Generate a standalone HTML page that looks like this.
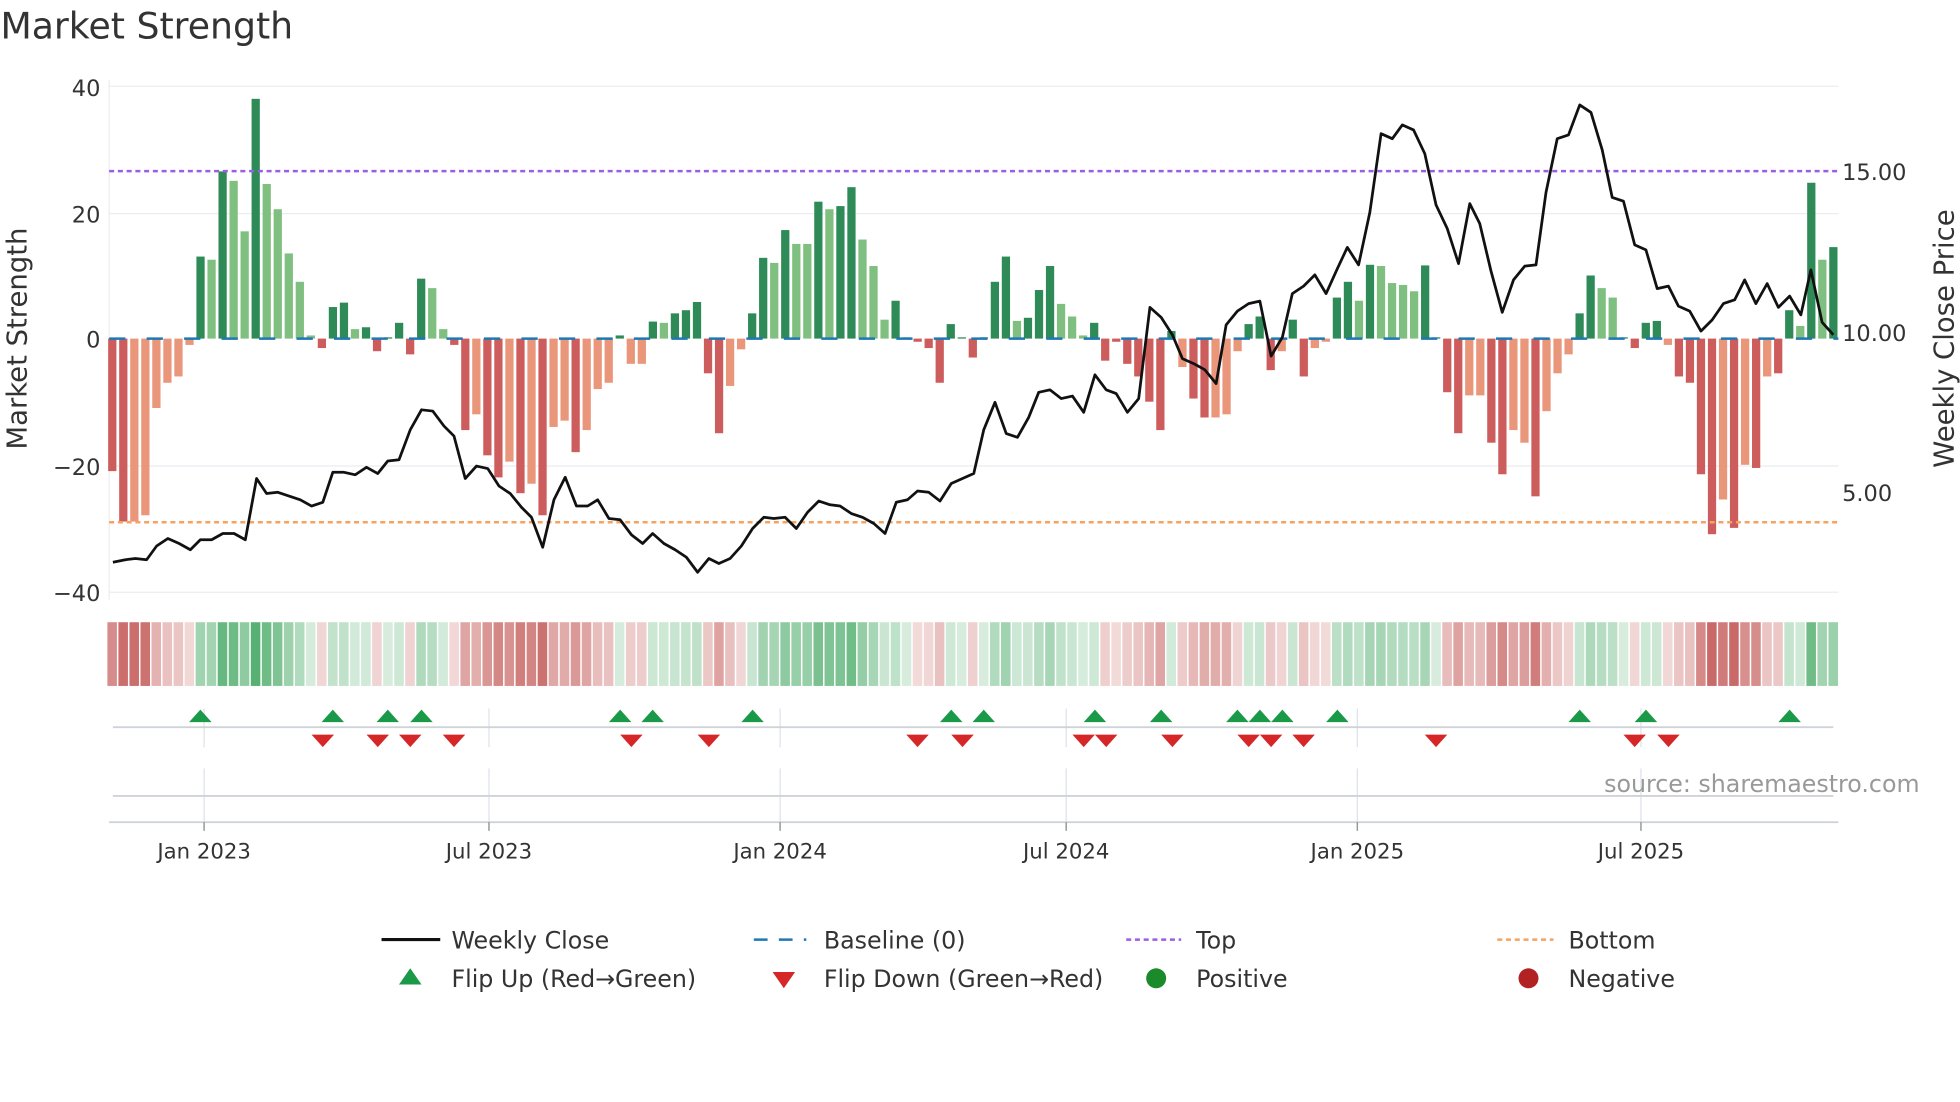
<!DOCTYPE html>
<html><head><meta charset="utf-8">
<style>
html,body{margin:0;padding:0;background:#fff;}
svg{display:block;font-family:"DejaVu Sans","Liberation Sans",sans-serif;}
</style></head>
<body>
<svg id="s" width="1960" height="1102" viewBox="0 0 1568 882" xmlns="http://www.w3.org/2000/svg">
<rect width="1568" height="882" fill="#fff"/>
<text x="0" y="31" font-size="29" fill="#333">Market Strength</text>
<g id="grid" stroke="#ececf2" stroke-width="1">
<line x1="87" y1="69" x2="1471" y2="69"/><line x1="87" y1="171" x2="1471" y2="171"/>
<line x1="87" y1="373" x2="1471" y2="373"/><line x1="87" y1="474" x2="1471" y2="474"/>
<line x1="87" y1="64" x2="87" y2="480"/>
</g>
<g font-size="18" fill="#333" text-anchor="end">
<text x="80" y="77">40</text><text x="80" y="178">20</text><text x="80" y="278">0</text>
<text x="80" y="380">−20</text><text x="80" y="481">−40</text>
</g>
<g font-size="18" fill="#333">
<text x="1474" y="144">15.00</text><text x="1474" y="273">10.00</text><text x="1474" y="401">5.00</text>
</g>
<text transform="translate(21,271) rotate(-90)" font-size="22" fill="#333" text-anchor="middle">Market Strength</text>
<text transform="translate(1563,271) rotate(-90)" font-size="22" fill="#333" text-anchor="middle">Weekly Close Price</text>
<g id="bars"></g>
<line x1="87" y1="271" x2="1471" y2="271" stroke="#1f77b4" stroke-width="2" stroke-dasharray="13 17"/>
<line x1="87" y1="137" x2="1471" y2="137" stroke="#9b5de5" stroke-width="2" stroke-dasharray="4 3"/>
<line x1="87" y1="418" x2="1471" y2="418" stroke="#f4a460" stroke-width="2" stroke-dasharray="4 3"/>
<polyline id="price" fill="none" stroke="#111" stroke-width="2.2" stroke-linejoin="round"/>
<g id="heat"></g>
<g stroke="#dde2ea" stroke-width="1">
<line x1="163" y1="567" x2="163" y2="598"/><line x1="391" y1="567" x2="391" y2="598"/>
<line x1="624" y1="567" x2="624" y2="598"/><line x1="853" y1="567" x2="853" y2="598"/>
<line x1="1086" y1="567" x2="1086" y2="598"/><line x1="1313" y1="567" x2="1313" y2="598"/>
<line x1="163" y1="615" x2="163" y2="658"/><line x1="391" y1="615" x2="391" y2="658"/>
<line x1="624" y1="615" x2="624" y2="658"/><line x1="853" y1="615" x2="853" y2="658"/>
<line x1="1086" y1="615" x2="1086" y2="658"/><line x1="1313" y1="615" x2="1313" y2="658"/>
</g>
<line x1="90" y1="582" x2="1467" y2="582" stroke="#cfd3d8" stroke-width="1.5"/>
<line x1="90" y1="637" x2="1467" y2="637" stroke="#cfd3d8" stroke-width="1.5"/>
<line x1="87" y1="658" x2="1471" y2="658" stroke="#cfd3d8" stroke-width="1.5"/>
<g id="flips"></g>
<g stroke="#999" stroke-width="1.2">
<line x1="163" y1="658" x2="163" y2="665"/><line x1="391" y1="658" x2="391" y2="665"/>
<line x1="624" y1="658" x2="624" y2="665"/><line x1="853" y1="658" x2="853" y2="665"/>
<line x1="1086" y1="658" x2="1086" y2="665"/><line x1="1313" y1="658" x2="1313" y2="665"/>
</g>
<g font-size="17" fill="#333" text-anchor="middle">
<text x="163" y="687">Jan 2023</text><text x="391" y="687">Jul 2023</text><text x="624" y="687">Jan 2024</text>
<text x="853" y="687">Jul 2024</text><text x="1086" y="687">Jan 2025</text><text x="1313" y="687">Jul 2025</text>
</g>
<text x="1536" y="634" font-size="19" fill="#999" text-anchor="end">source: sharemaestro.com</text>
<g font-size="19" fill="#333">
<line x1="305" y1="752" x2="352" y2="752" stroke="#111" stroke-width="2.5"/>
<text x="361" y="759">Weekly Close</text>
<line x1="603" y1="752" x2="645" y2="752" stroke="#1f77b4" stroke-width="2" stroke-dasharray="11 9"/>
<text x="659" y="759">Baseline (0)</text>
<line x1="901" y1="752" x2="945" y2="752" stroke="#9b5de5" stroke-width="2" stroke-dasharray="4 3"/>
<text x="957" y="759">Top</text>
<line x1="1198" y1="752" x2="1243" y2="752" stroke="#f4a460" stroke-width="2" stroke-dasharray="4 3"/>
<text x="1255" y="759">Bottom</text>
<polygon points="319,788 337,788 328,775" fill="#1a9a48"/>
<text x="361" y="790">Flip Up (Red→Green)</text>
<polygon points="618,778 636,778 627,791" fill="#d62728"/>
<text x="659" y="790">Flip Down (Green→Red)</text>
<circle cx="925" cy="783" r="8" fill="#1a8a2a"/>
<text x="957" y="790">Positive</text>
<circle cx="1223" cy="783" r="8" fill="#b22222"/>
<text x="1255" y="790">Negative</text>
</g>
</svg>
<script>
var NS="http://www.w3.org/2000/svg";
function el(t,a,p){var e=document.createElementNS(NS,t);for(var k in a)e.setAttribute(k,a[k]);p.appendChild(e);return e;}
var D=[[-21,1],[-29,1],[-29,0],[-28,0],[-11,0],[-7,0],[-6,0],[-1,0],[13,1],[12.5,0],[26.5,1],[25,0],[17,0],[38,1],[24.5,0],[20.5,0],[13.5,0],[9,0],[0.5,0],[-1.5,1],[5,1],[5.7,1],[1.5,0],[1.8,1],[-2,1],[0.2,1],[2.5,1],[-2.5,1],[9.5,1],[8,0],[1.5,0],[-1,1],[-14.5,1],[-12,0],[-18.5,1],[-22,1],[-19.5,0],[-24.5,1],[-23,0],[-28,1],[-14,0],[-13,0],[-18,1],[-14.5,0],[-8,0],[-7,0],[0.5,1],[-4,0],[-4,0],[2.7,1],[2.5,0],[4,1],[4.5,1],[5.8,1],[-5.5,1],[-15,1],[-7.5,0],[-1.7,0],[4,1],[12.8,1],[12,0],[17.2,1],[15,0],[15,0],[21.7,1],[20.5,0],[21,1],[24,1],[15.7,0],[11.5,0],[3,0],[6,1],[0.2,1],[-0.5,1],[-1.5,1],[-7,1],[2.3,1],[0.2,1],[-3,1],[0.2,1],[9,1],[13,1],[2.8,0],[3.3,1],[7.7,1],[11.5,1],[5.5,0],[3.5,0],[0.5,0],[2.5,1],[-3.5,1],[-0.5,1],[-4,1],[-6,1],[-10,1],[-14.5,1],[1.2,1],[-4.5,0],[-9.5,1],[-12.5,1],[-12.5,0],[-12,0],[-2,0],[2.3,1],[3.5,1],[-5,1],[-2,0],[3,1],[-6,1],[-1.5,0],[-0.5,0],[6.5,1],[9,1],[6,0],[11.7,1],[11.5,0],[8.8,0],[8.5,0],[7.5,0],[11.6,1],[0.2,1],[-8.5,1],[-15,1],[-9,0],[-9,0],[-16.5,1],[-21.5,1],[-14.5,0],[-16.5,0],[-25,1],[-11.5,0],[-5.5,0],[-2.5,0],[4,1],[10,1],[8,0],[6.5,0],[0.2,1],[-1.5,1],[2.5,1],[2.8,1],[-1,0],[-6,1],[-7,1],[-21.5,1],[-31,1],[-25.5,0],[-30,1],[-20,0],[-20.5,1],[-6,0],[-5.5,1],[4.5,1],[2,0],[24.7,1],[12.5,0],[14.5,1]];
var bars=document.getElementById('bars'),heat=document.getElementById('heat');
var n=D.length,x0=89.5,dx=(1467-89.5)/(n-1);
for(var i=0;i<n;i++){var v=D[i][0],d=D[i][1],x=x0+i*dx,h=Math.abs(v)*5.05;
 var c=v>=0?(d?'#2e8b57':'#7fbf7f'):(d?'#cd5c5c':'#e9967a');
 el('rect',{x:x-3.3,y:v>=0?271-h:271,width:6.6,height:Math.max(h,0.8),fill:c},bars);
 var a=Math.min(0.2+0.65*Math.abs(v)/30,0.85);
 el('rect',{x:x-dx/2+0.5,y:498,width:dx-1.2,height:51,fill:v>=0?'#3aa35a':'#c0504d','fill-opacity':a},heat);
}
var P=[[90,450],[100,448],[108,447],[117,448],[125,437],[134,431],[143,435],[152,440],[160,432],[169,432],[178,427],[187,427],[196,432],[205,383],[213,395],[222,394],[231,397],[240,400],[249,405],[258,402],[266,378],[275,378],[284,380],[293,374],[302,379],[310,369],[319,368],[328,344],[337,328],[346,329],[355,341],[363,349],[372,383],[381,373],[390,375],[399,389],[408,395],[417,406],[425,414],[434,438],[443,400],[452,382],[461,405],[470,405],[478,400],[487,415],[496,416],[505,428],[514,435],[522,427],[531,435],[540,440],[549,446],[558,458],[567,447],[575,451],[584,447],[593,437],[602,423],[611,414],[619,415],[628,414],[637,423],[646,410],[655,401],[664,404],[672,405],[681,411],[690,414],[699,419],[708,427],[717,402],[726,400],[734,393],[743,394],[752,401],[761,387],[770,383],[779,379],[787,344],[796,322],[805,347],[814,350],[823,334],[831,314],[840,312],[849,319],[858,317],[867,330],[876,300],[885,312],[893,315],[902,330],[911,319],[920,246],[929,254],[938,268],[946,287],[955,291],[964,296],[973,307],[981,260],[990,249],[999,243],[1008,241],[1017,285],[1026,270],[1034,235],[1043,229],[1052,220],[1061,235],[1070,215],[1078,198],[1087,212],[1096,170],[1105,107],[1114,111],[1122,100],[1131,104],[1140,123],[1149,164],[1158,183],[1167,211],[1176,163],[1184,179],[1193,217],[1202,250],[1211,224],[1220,213],[1229,212],[1237,154],[1246,111],[1255,108],[1264,84],[1273,90],[1282,120],[1290,158],[1299,161],[1308,196],[1317,200],[1326,231],[1335,229],[1343,245],[1352,249],[1361,265],[1370,256],[1379,243],[1388,240],[1396,224],[1405,243],[1414,227],[1423,246],[1432,237],[1441,252],[1449,216],[1458,258],[1467,268]];
document.getElementById('price').setAttribute('points',P.map(function(p){return p.join(',')}).join(' '));
var fl=document.getElementById('flips');
[160,266,310,337,496,522,602,761,787,876,929,990,1008,1026,1070,1264,1317,1432].forEach(function(x){el('polygon',{points:(x-9)+',578 '+(x+9)+',578 '+x+',568',fill:'#1a9a48'},fl);});
[258,302,328,363,505,567,734,770,867,885,938,999,1017,1043,1149,1308,1335].forEach(function(x){el('polygon',{points:(x-9)+',588 '+(x+9)+',588 '+x+',598',fill:'#d62728'},fl);});
</script>
</body></html>
